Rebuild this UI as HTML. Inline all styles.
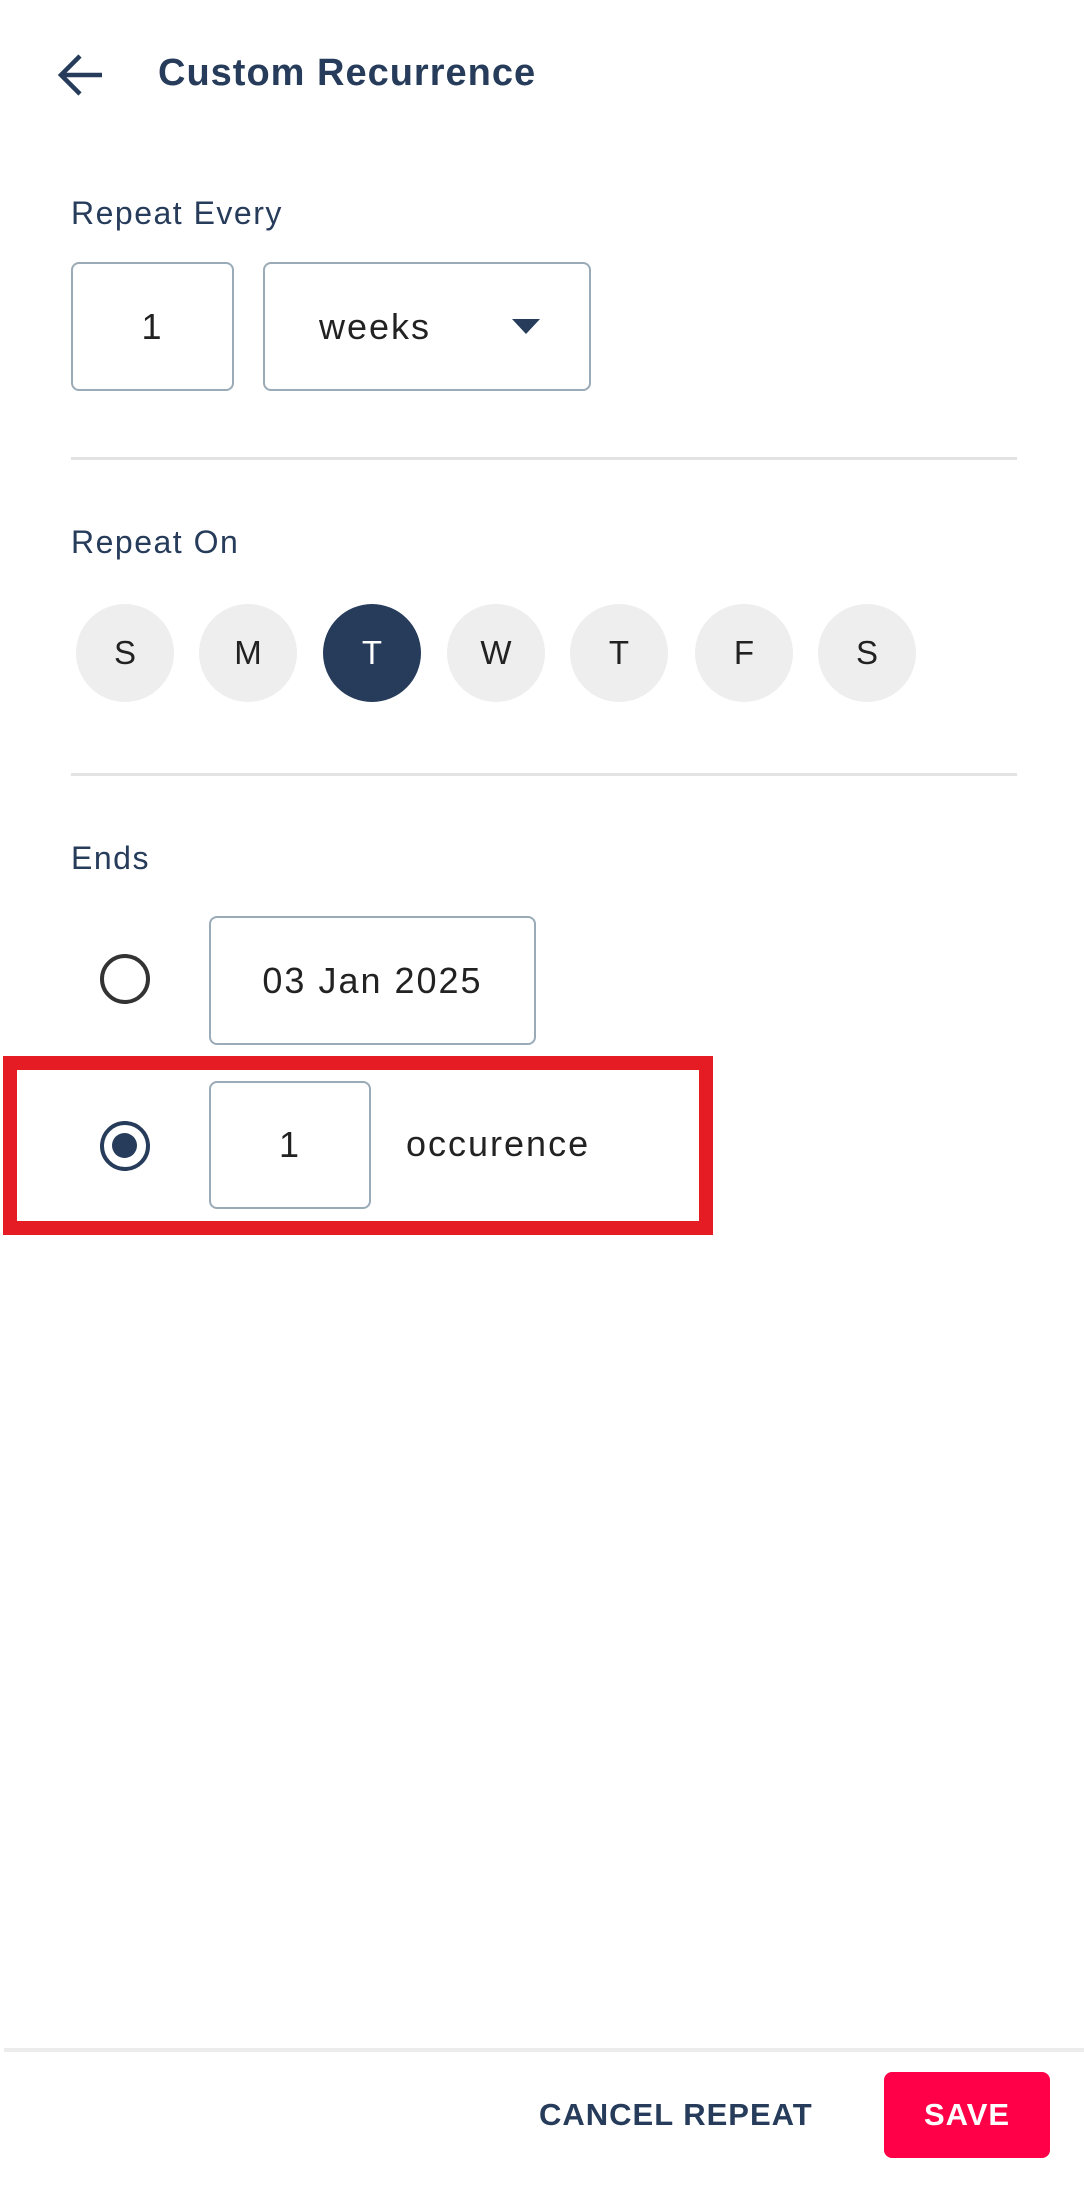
<!DOCTYPE html>
<html><head><meta charset="utf-8"><style>
*{margin:0;padding:0;box-sizing:border-box}
body{width:1084px;height:2196px;background:#fff;position:relative;font-family:"Liberation Sans",sans-serif;color:#263c5a;overflow:hidden}
.a{position:absolute}
.box{position:absolute;border:2.5px solid #9aabb8;border-radius:8px;display:flex;align-items:center;justify-content:center;font-size:36px;color:#222;letter-spacing:2px}
.lbl{position:absolute;font-size:32px;letter-spacing:1.5px;color:#263c5a;line-height:1}
.day{position:absolute;width:98px;height:98px;border-radius:50%;background:#eeeeee;top:604px;display:flex;align-items:center;justify-content:center;font-size:33px;color:#222}
.hr{position:absolute;left:71px;width:946px;height:3px;background:#e3e3e3}
</style></head><body>
<svg class="a" style="left:56px;top:52px" width="50" height="46" viewBox="0 0 50 46"><path d="M6 23H46M24 4L5 23L24 42" fill="none" stroke="#263c5a" stroke-width="4.5"/></svg>
<div class="a" style="left:158px;top:52px;font-size:38px;font-weight:bold;letter-spacing:1px;line-height:42px">Custom Recurrence</div>
<div class="lbl" style="left:71px;top:197px">Repeat Every</div>
<div class="box" style="left:71px;top:262px;width:163px;height:129px">1</div>
<div class="box" style="left:263px;top:262px;width:328px;height:129px;justify-content:flex-start;padding-left:54px">weeks</div>
<svg class="a" style="left:512px;top:319px" width="28" height="15"><path d="M0 0H28L14 15Z" fill="#263c5a"/></svg>
<div class="hr" style="top:457px"></div>
<div class="lbl" style="left:71px;top:526px">Repeat On</div>
<div class="day" style="left:76px">S</div>
<div class="day" style="left:199px">M</div>
<div class="day" style="left:323px;background:#263c5a;color:#fff">T</div>
<div class="day" style="left:447px">W</div>
<div class="day" style="left:570px">T</div>
<div class="day" style="left:695px">F</div>
<div class="day" style="left:818px">S</div>
<div class="hr" style="top:773px"></div>
<div class="lbl" style="left:71px;top:842px">Ends</div>
<div class="a" style="left:100px;top:954px;width:50px;height:50px;border:4.5px solid #333;border-radius:50%"></div>
<div class="box" style="left:209px;top:916px;width:327px;height:129px">03 Jan 2025</div>
<div class="a" style="left:3px;top:1056px;width:710px;height:179px;border:14px solid #e51c23"></div>
<div class="a" style="left:100px;top:1121px;width:50px;height:50px;border:4.5px solid #263c5a;border-radius:50%"><div class="a" style="left:8px;top:8px;width:25px;height:25px;border-radius:50%;background:#263c5a"></div></div>
<div class="box" style="left:209px;top:1081px;width:162px;height:128px">1</div>
<div class="a" style="left:406px;top:1123px;font-size:36px;color:#222;letter-spacing:2px">occurence</div>
<div class="a" style="left:4px;top:2048px;width:1080px;height:4px;background:#ececec"></div>
<div class="a" style="left:539px;top:2097px;font-size:31px;font-weight:bold;letter-spacing:1px">CANCEL REPEAT</div>
<div class="a" style="left:884px;top:2072px;width:166px;height:86px;background:#ff0048;border-radius:8px;color:#fff;font-size:31px;font-weight:bold;display:flex;align-items:center;justify-content:center;letter-spacing:1px">SAVE</div>
</body></html>
